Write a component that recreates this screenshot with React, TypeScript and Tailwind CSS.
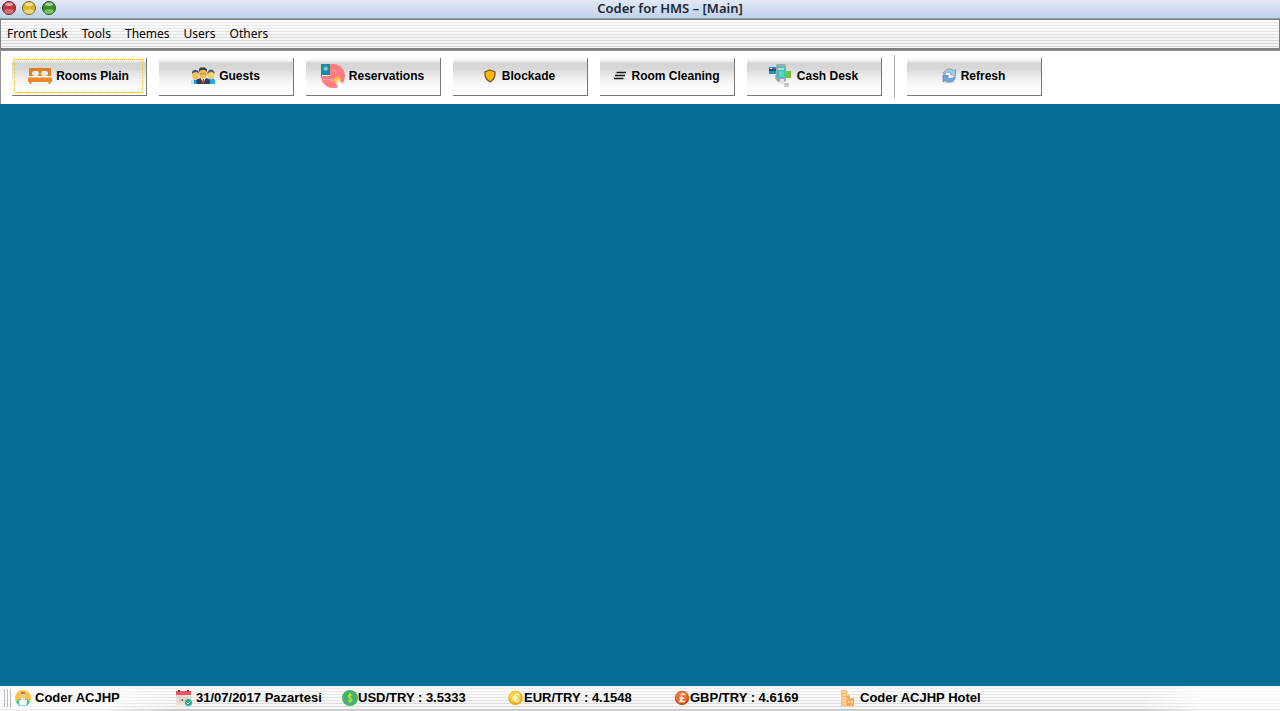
import type { ReactNode } from "react";

function BedIcon() {
  return (
    <svg width="24" height="18" viewBox="0 0 24 18" aria-hidden="true">
      <path d="M1 10V2Q1 1 2 1H22Q23 1 23 2V10Z" fill="#de8024" />
      <path d="M1 9H23V11H1Z" fill="#fff4ea" />
      <rect x="4" y="4" width="7" height="5" rx="2.400" fill="#eceef4" />
      <rect x="13" y="4" width="7" height="5" rx="2.400" fill="#eceef4" />
      <path d="M0 10.500H24V15H22.500V17H20.500V15H3.500V17H1.500V15H0Z" fill="#e6882f" />
    </svg>
  );
}

function GuestsIcon() {
  return (
    <svg width="24" height="18" viewBox="0 0 24 18" aria-hidden="true">
      <path d="M0 17V13L3 11H7L9 13V17Z" fill="#bfe3f6" />
      <path d="M15 17V13L18 11H22L24 13V17Z" fill="#35a8df" />
      <ellipse cx="4.500" cy="8.500" rx="3.200" ry="4" fill="#f6c04b" />
      <path d="M1 7Q.5 3 4.500 3Q8 3 8 6.500L6 5L2.500 5.500Z" fill="#374c68" />
      <ellipse cx="20" cy="8" rx="3.200" ry="4.200" fill="#ffcf6b" />
      <path d="M16.500 8Q16 2.500 20 2.500Q23.500 2.500 23.700 7L21 5L18 5.500Z" fill="#5b6472" />
      <path d="M5 17V13L9 11H15.500L19 13V17Z" fill="#303f5c" />
      <path d="M9.500 11L12 15.500L15 11Z" fill="#fff" />
      <path d="M11.500 12H13L13.300 15L12.200 17L11.200 15Z" fill="#e04b46" />
      <ellipse cx="12" cy="6.500" rx="4" ry="5.300" fill="#f7be48" />
      <path d="M8 5V2Q8.500 .5 10 .5H14L16 2.500V5L14 3H10Z" fill="#2f3e56" />
      <path d="M9 6H11.500V7.500H9ZM12.500 6H15V7.500H12.500Z" fill="#b2985b" />
      <path d="M3 13L5 13L6 17H3ZM19 13H20.500V17H18.500Z" fill="#15a4dc" />
    </svg>
  );
}

function ReservationIcon() {
  return (
    <svg width="24" height="24" viewBox="0 0 24 24" aria-hidden="true">
      <circle cx="12" cy="12" r="12" fill="#ff7b82" />
      <path d="M0 0H9V12H0Z" fill="#188da0" />
      <circle cx="4.700" cy="4.700" r="2.400" fill="#58bbc2" />
      <path d="M3.500 4.700H6M4.700 3.500V6" stroke="#a1dde0" strokeWidth=".7" />
      <path d="M1 11H9V12H1Z" fill="#d8eef1" />
      <path d="M10.500 6.500H14.500V15H10M2 13V15.500H10V17L15 16.500" fill="none" stroke="#fb9ea2" />
      <circle cx="16.500" cy="16.500" r="3.500" fill="#f6bd42" />
      <path d="M14 15.500L17 17L18.500 15" fill="none" stroke="#ffe5a0" />
      <path d="M15 19L17.500 17L20 18L21.500 20L21 23H17Z" fill="#fff" />
    </svg>
  );
}

function ShieldIcon() {
  return (
    <svg width="12" height="14" viewBox="0 0 12 14" aria-hidden="true">
      <path d="M6 1L11 3Q11 6 10.500 8Q9.500 11 6 13Q2.500 11 1.500 8Q1 6 1 3Z" fill="#ffb900" stroke="#7c512e" strokeWidth="1.300" />
    </svg>
  );
}

function CleaningIcon() {
  return (
    <svg width="14" height="10" viewBox="0 0 14 10" aria-hidden="true">
      <path d="M3.500 1.500H13M2 4.500H12M1 7.500H10.500" stroke="#17181b" strokeWidth="1.600" />
    </svg>
  );
}

function CashIcon() {
  return (
    <svg width="24" height="24" viewBox="0 0 24 24" aria-hidden="true">
      <path d="M0 3H9V10H0Z" fill="#248dc4" />
      <path d="M0 5H8V7H0Z" fill="#174d72" />
      <path d="M1 4H3V5H1Z" fill="#ffe274" />
      <path d="M15 7H22V14H15Z" fill="#75bd3e" />
      <path d="M6 11H9V15H6Z" fill="#f1b21f" />
      <path d="M7 1L8 0H16L17 2V17L15 18H9L7 16Z" fill="#9daaab" />
      <rect x="8" y="3" width="8" height="11" rx="1" fill="#35c4b8" />
      <path d="M9 4H15V6H9Z" fill="#a3e8d6" />
      <path d="M10 8H15M10 10H15M10 12H15" stroke="#81e3d2" />
      <path d="M11 15H15V20H11Z" fill="#e3e5e6" />
      <path d="M15 19H20V23H15Z" fill="#c9c9c9" />
    </svg>
  );
}

function RefreshIcon() {
  return (
    <svg width="15" height="16" viewBox="0 0 15 16" aria-hidden="true">
      <ellipse cx="7" cy="14" rx="6" ry="1.500" fill="#d8d9dc" />
      <path d="M1 5.500Q3 1 7.500 1Q10 1 11.500 2.500L13.500 1.500V8H7L9.500 5.500Q6.500 3 4.500 5.500Z" fill="#a7c5e8" stroke="#6690c2" strokeWidth=".7" />
      <path d="M13.500 9.500Q12 14 7 14Q4.500 14 3 12.500L1 14V7H7.500L5 9.500Q8.500 12 10 9.500Z" fill="#73a2d9" stroke="#5387c0" strokeWidth=".7" />
      <path d="M4 6H7L8 8.500H11" fill="none" stroke="#f8fbff" strokeWidth="1.800" />
    </svg>
  );
}

function UserIcon() {
  return (
    <svg width="16" height="16" viewBox="0 0 16 16" aria-hidden="true">
      <circle cx="8" cy="8" r="8" fill="#ffc344" />
      <path d="M1 12L4 9H12L15 12L12 16H4Z" fill="#2ec5b3" />
      <circle cx="8" cy="5.500" r="2.600" fill="#f3c695" />
      <path d="M5.500 4Q5.500 2 8 2Q10.500 2 10.500 4L9 3.500H7Z" fill="#71654f" />
      <path d="M4 10H12L11.500 15.500H4.500Z" fill="#fff" />
      <path d="M6 8H10V10H6Z" fill="#f5e8dc" />
    </svg>
  );
}

function CalendarIcon() {
  return (
    <svg width="16" height="16" viewBox="0 0 16 16" aria-hidden="true">
      <path d="M0 1H15V15H0Z" fill="#e6dfcd" />
      <path d="M0 1H15V5H0Z" fill="#ed5564" />
      <path d="M2 0H4V2H2ZM11 0H13V2H11Z" fill="#465366" />
      <path d="M2 8H13M2 11H10M4 6V13M8 6V13M12 6V10" stroke="#d2cbbd" strokeWidth=".8" />
      <path d="M5.500 9H7V11H5.500Z" fill="#6a6568" />
      <circle cx="12.500" cy="12.500" r="3.500" fill="#24ad91" />
      <path d="M10.700 12.500L12.200 14L14.500 11.500" fill="none" stroke="#fff" />
    </svg>
  );
}

function CoinIcon({ kind }: { kind: "usd" | "eur" | "gbp" }) {
  if (kind === "usd") {
    return (
      <svg width="16" height="16" viewBox="0 0 16 16" aria-hidden="true">
        <circle cx="8" cy="8" r="8" fill="#46b36b" />
        <path d="M10.200 5.500Q8 4 6.500 5.200Q5.500 7 8 8Q11 9 9.800 10.700Q8 12 5.800 10.700M8 3V13" fill="none" stroke="#d1ed36" />
      </svg>
    );
  }
  if (kind === "eur") {
    return (
      <svg width="16" height="16" viewBox="0 0 16 16" aria-hidden="true">
        <circle cx="7.500" cy="8" r="7.200" fill="#eeaf0a" />
        <circle cx="7" cy="7" r="5.700" fill="#ffcf3c" />
        <path d="M11 5Q8.500 3 7 5.500Q5.500 8 7 10.500Q8.500 12.500 11 11M4.500 7H9.500M4.500 9H9.500" fill="none" stroke="#fff8dc" strokeWidth="1.500" />
      </svg>
    );
  }
  return (
    <svg width="16" height="16" viewBox="0 0 16 16" aria-hidden="true">
      <circle cx="8" cy="8" r="7.200" fill="#d44f19" />
      <circle cx="7.500" cy="7" r="5.800" fill="#ee7539" />
      <path d="M11 5Q10 3.500 8.500 4Q7 4.500 7.500 6.500Q8.500 9 6 11.500H11M5.500 8H10" fill="none" stroke="#fff" strokeWidth="1.400" />
    </svg>
  );
}

function HotelIcon() {
  return (
    <svg width="16" height="16" viewBox="0 0 16 16" aria-hidden="true">
      <path d="M1 0H7V5H10V8H14V16H1Z" fill="#f9bd74" />
      <path d="M2 2H6M2 5H6M2 8H6M2 11H6M2 14H6" stroke="#ffe0b2" />
      <path d="M7 6H9.500V8H7ZM7 9H14V16H7Z" fill="#f2a34b" />
      <path d="M8 11H9.500V13H8ZM11 11H12.500V13H11ZM10 14.500H12" fill="#ffdfb1" stroke="#ffdfb1" strokeWidth=".4" />
    </svg>
  );
}

function WindowDot({ kind, label }: { kind: "red" | "yellow" | "green"; label: string }) {
  const colors = {
    red: ["#702326", "#b93b3f", "#f79493"],
    yellow: ["#806d1b", "#d6b92f", "#fff399"],
    green: ["#245920", "#3b8f2d", "#a4e788"],
  }[kind];
  return (
    <button type="button" aria-label={label} className="size-4">
      <svg width="16" height="16" viewBox="0 0 16 16" aria-hidden="true">
        <circle cx="8" cy="8" r="6.500" fill={colors[1]} stroke={colors[0]} />
        <ellipse cx="8" cy="11.500" rx="4.500" ry="2.200" fill={colors[2]} opacity=".6" />
        <ellipse cx="8" cy="4.300" rx="3.800" ry="1.800" fill="#fff" opacity=".55" />
      </svg>
    </button>
  );
}

function ToolButton({ icon, label, gap = "gap-1", focused = false }: { icon: ReactNode; label: string; gap?: string; focused?: boolean }) {
  return (
    <button
      type="button"
      className="h-[38px] w-[135px] shrink-0 border-r border-b border-[#777] bg-[linear-gradient(to_bottom,#fbfbfb_0px,#f0f0f0_3px,#d4d4d4_5px,#d8d8d8_11px,#ededed_19px,#fcfcfc_29px,#fff_37px)] pt-px pr-[3px] pb-0.5 pl-0.5 text-[12px] leading-4 font-bold"
    >
      <span className={`flex h-full items-center justify-center border border-dotted ${gap} ${focused ? "border-[#f4c500]" : "border-transparent"}`}>
        {icon}
        <span>{label}</span>
      </span>
    </button>
  );
}

function StatusItem({ icon, label, gap = "gap-1" }: { icon: ReactNode; label: string; gap?: string }) {
  return (
    <div className={`flex w-[166px] shrink-0 items-center whitespace-nowrap ${gap}`}>
      {icon}
      <span>{label}</span>
    </div>
  );
}

const menus = ["Front Desk", "Tools", "Themes", "Users", "Others"];

export default function App() {
  return (
    <div className="flex min-h-screen flex-col bg-[#056d96] font-['Liberation_Sans',Arial,sans-serif] text-black">
      <header className="grid h-[19px] grid-cols-[1fr_auto_1fr] items-start border-b border-[#8f9dac] bg-linear-to-b from-[#e4e9f7] to-[#bfd1ea] font-['Noto_Sans',sans-serif]">
        <div className="flex gap-1 pl-px">
          <WindowDot kind="red" label="Close" />
          <WindowDot kind="yellow" label="Minimize" />
          <WindowDot kind="green" label="Zoom" />
        </div>
        <h1 className="pl-15 text-[13px] leading-4 font-semibold text-[#1b2831]">Coder for HMS – [Main]</h1>
      </header>

      <nav className="h-[31px] border border-b-2 border-[#808080] bg-[linear-gradient(to_bottom,#ffffff99,#ffffff00),repeating-linear-gradient(to_bottom,#f5f5f5_0px,#f5f5f5_2px,#d2d2d2_2px,#d2d2d2_3px)] pl-1.5 font-['Noto_Sans',sans-serif] text-[12px] leading-7">
        <ul className="flex gap-3.5">
          {menus.map((menu) => (
            <li key={menu}>
              <button type="button" className="block">{menu}</button>
            </li>
          ))}
        </ul>
      </nav>

      <div role="toolbar" aria-label="Main tools" className="flex h-[54px] items-start gap-3 border-t border-l border-[#909090] bg-white pl-[11px]">
        <div className="flex gap-3 pt-[7px]">
          <ToolButton icon={<BedIcon />} label="Rooms Plain" focused />
          <ToolButton icon={<GuestsIcon />} label="Guests" />
          <ToolButton icon={<ReservationIcon />} label="Reservations" />
          <ToolButton icon={<ShieldIcon />} label="Blockade" gap="gap-1.5" />
          <ToolButton icon={<CleaningIcon />} label="Room Cleaning" />
          <ToolButton icon={<CashIcon />} label="Cash Desk" />
        </div>
        <div role="separator" className="mt-1 h-[43px] w-px bg-[#aaa]" />
        <div className="pt-[7px]">
          <ToolButton icon={<RefreshIcon />} label="Refresh" />
        </div>
      </div>

      <main className="grow bg-[#056d96]" />

      <footer className="flex h-[25px] items-center overflow-hidden bg-[linear-gradient(to_right,#ffffffb0_8%,#ffffff00_14%,#ffffff00_89%,#ffffffb0_94%),linear-gradient(to_bottom,#ffffffb0,#ffffff20_23px,#a8a8a880_24px),repeating-linear-gradient(to_bottom,#f5f5f5_0px,#f5f5f5_2px,#d2d2d2_2px,#d2d2d2_3px)] pb-0.5 pl-1 text-[13px] leading-4 font-bold">
        <div className="flex h-[18px] w-[11px] shrink-0 gap-0.5">
          <span className="w-px bg-[#bbb]" />
          <span className="w-px bg-[#bbb]" />
          <span className="w-px bg-[#bbb]" />
        </div>
        <div className="w-[161px] shrink-0">
          <StatusItem icon={<UserIcon />} label="Coder ACJHP" />
        </div>
        <StatusItem icon={<CalendarIcon />} label="31/07/2017 Pazartesi" />
        <StatusItem icon={<CoinIcon kind="usd" />} label="USD/TRY : 3.5333" gap="gap-0" />
        <StatusItem icon={<CoinIcon kind="eur" />} label="EUR/TRY : 4.1548" gap="gap-0" />
        <StatusItem icon={<CoinIcon kind="gbp" />} label="GBP/TRY : 4.6169" gap="gap-0" />
        <StatusItem icon={<HotelIcon />} label="Coder ACJHP Hotel" />
      </footer>
    </div>
  );
}
